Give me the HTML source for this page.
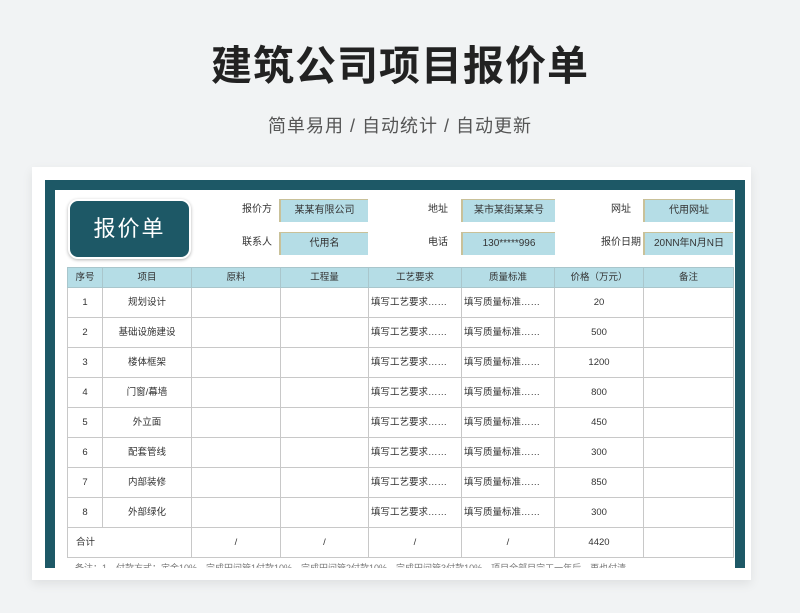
<!DOCTYPE html><html><head><meta charset="utf-8"><style>
body{margin:0;width:800px;height:613px;background:#f1f3f4;font-family:"Liberation Sans","Noto Sans CJK SC",sans-serif;position:relative;overflow:hidden}
.a{position:absolute}
h1{position:absolute;top:32px;left:0;width:800px;text-align:center;margin:0;font-size:41px;font-weight:bold;color:#222;letter-spacing:1px}
.sub{top:112px;left:0;width:800px;text-align:center;font-size:18px;color:#555;letter-spacing:1px}
.card{left:32px;top:167px;width:719px;height:413px;background:#fff;box-shadow:0 4px 10px rgba(0,0,0,.08)}
.frame{left:45px;top:180px;width:700px;height:388px;background:#1d5866;overflow:hidden}
.inner{left:10px;top:10px;width:680px;height:390px;background:#fff}
.lbl{font-size:10px;color:#333;text-align:right;width:50px;height:22px;line-height:22px}
.box{background:#b5dde6;border-left:2px solid #c9c199;border-top:1px solid #c9c199;font-size:10px;color:#333;text-align:center;height:22px;line-height:22px}
table{position:absolute;left:67px;top:267px;border-collapse:collapse;font-size:9.5px;color:#333;table-layout:fixed}
td{border:1px solid #c8c8c8;text-align:center;height:29px;padding:0;white-space:nowrap;overflow:hidden;vertical-align:middle;line-height:12px}
tr.h td{background:#b5dde6;height:19px;border-color:#a9c6cc}
td.l{text-align:left;padding-left:2px}
</style></head><body>
<h1>建筑公司项目报价单</h1>
<div class="a sub">简单易用 / 自动统计 / 自动更新</div>
<div class="a card"></div>
<div class="a frame"><div class="a inner"></div></div>
<div class="a" style="left:68px;top:199px;width:119px;height:56px;background:#1d5866;border:2px solid #fff;border-radius:10px;box-shadow:0 1px 3px rgba(0,0,0,.3);color:#fff;font-size:22px;line-height:56px;text-align:center;letter-spacing:2px">报价单</div>
<div class="a lbl" style="left:222px;top:199px">报价方</div><div class="a box" style="left:279px;top:199px;width:87px">某某有限公司</div>
<div class="a lbl" style="left:222px;top:232px">联系人</div><div class="a box" style="left:279px;top:232px;width:87px">代用名</div>
<div class="a lbl" style="left:398px;top:199px">地址</div><div class="a box" style="left:461px;top:199px;width:92px">某市某街某某号</div>
<div class="a lbl" style="left:398px;top:232px">电话</div><div class="a box" style="left:461px;top:232px;width:92px">130*****996</div>
<div class="a lbl" style="left:581px;top:199px">网址</div><div class="a box" style="left:643px;top:199px;width:88px">代用网址</div>
<div class="a lbl" style="left:591px;top:232px;width:50px">报价日期</div><div class="a box" style="left:643px;top:232px;width:88px">20NN年N月N日</div>
<table>
<colgroup><col style="width:35px"><col style="width:89px"><col style="width:89px"><col style="width:88px"><col style="width:93px"><col style="width:93px"><col style="width:89px"><col style="width:90px"></colgroup>
<tr class="h"><td>序号</td><td>项目</td><td>原料</td><td>工程量</td><td>工艺要求</td><td>质量标准</td><td>价格（万元）</td><td>备注</td></tr>
<tr><td>1</td><td>规划设计</td><td></td><td></td><td class="l">填写工艺要求……</td><td class="l">填写质量标准……</td><td>20</td><td></td></tr>
<tr><td>2</td><td>基础设施建设</td><td></td><td></td><td class="l">填写工艺要求……</td><td class="l">填写质量标准……</td><td>500</td><td></td></tr>
<tr><td>3</td><td>楼体框架</td><td></td><td></td><td class="l">填写工艺要求……</td><td class="l">填写质量标准……</td><td>1200</td><td></td></tr>
<tr><td>4</td><td>门窗/幕墙</td><td></td><td></td><td class="l">填写工艺要求……</td><td class="l">填写质量标准……</td><td>800</td><td></td></tr>
<tr><td>5</td><td>外立面</td><td></td><td></td><td class="l">填写工艺要求……</td><td class="l">填写质量标准……</td><td>450</td><td></td></tr>
<tr><td>6</td><td>配套管线</td><td></td><td></td><td class="l">填写工艺要求……</td><td class="l">填写质量标准……</td><td>300</td><td></td></tr>
<tr><td>7</td><td>内部装修</td><td></td><td></td><td class="l">填写工艺要求……</td><td class="l">填写质量标准……</td><td>850</td><td></td></tr>
<tr><td>8</td><td>外部绿化</td><td></td><td></td><td class="l">填写工艺要求……</td><td class="l">填写质量标准……</td><td>300</td><td></td></tr>
<tr><td colspan="2" class="l" style="padding-left:8px;height:26px">合计</td><td>/</td><td>/</td><td>/</td><td>/</td><td>4420</td><td></td></tr>
</table>
<div class="a" style="left:75px;top:563px;font-size:9px;color:#777;height:5px;overflow:hidden;line-height:11px;white-space:nowrap">备注：1、付款方式：定金10%，完成田间管1付款10%，完成田间管2付款10%，完成田间管3付款10%，项目全部目完工一年后，再也付清</div>
</body></html>
